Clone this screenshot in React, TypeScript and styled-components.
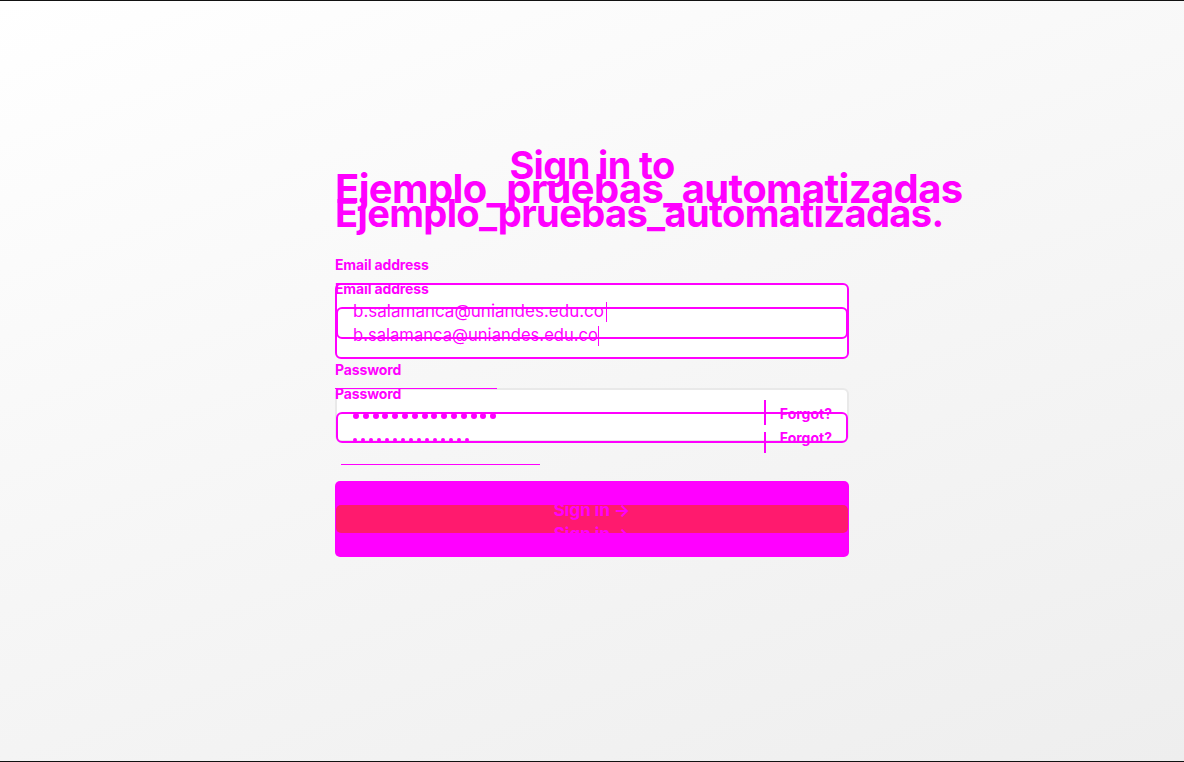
import React from 'react';
import styled, { createGlobalStyle } from 'styled-components';

const MAGENTA = '#ff00ff';
const PINK = '#ff1a6e';

const GlobalStyle = createGlobalStyle`
  html, body {
    margin: 0;
    padding: 0;
  }
  body {
    font-family: Inter, "Noto Sans", sans-serif;
  }
  * {
    box-sizing: border-box;
  }
`;

const Page = styled.div`
  width: 1184px;
  height: 762px;
  border-top: 1px solid #111;
  border-bottom: 1px solid #111;
  background: linear-gradient(160deg, #ffffff 0%, #f7f7f7 45%, #eeeeee 100%);
  overflow: hidden;
`;

const Column = styled.main`
  width: 514px;
  margin: 0 auto;
  padding-top: 152px;
  display: flex;
  flex-direction: column;
`;

const Heading = styled.h1`
  margin: 0;
  text-align: center;
  color: ${MAGENTA};
  font-weight: 700;
  line-height: 24px;
  letter-spacing: -0.02em;
  white-space: nowrap;
`;

const HeadingLine = styled.span<{ $size: number }>`
  display: block;
  font-size: ${(p) => p.$size}px;
`;

const LabelStack = styled.div<{ $top: number }>`
  position: relative;
  z-index: 2;
  margin-top: ${(p) => p.$top}px;
  color: ${MAGENTA};
  font-size: 14px;
  font-weight: 700;
  line-height: 24px;
  letter-spacing: -0.01em;
`;

const EmailBox = styled.div`
  position: relative;
  margin-top: -18px;
  height: 76px;
  padding: 14px 16px 0;
  background: #fff;
  border: 2px solid ${MAGENTA};
  border-radius: 6px;
`;

const InnerOutline = styled.div<{ $top: number; $height: number }>`
  position: absolute;
  left: -1px;
  right: -1px;
  top: ${(p) => p.$top}px;
  height: ${(p) => p.$height}px;
  border: 2px solid ${MAGENTA};
  border-radius: 6px;
`;

const ValueLine = styled.div<{ $size: number }>`
  position: relative;
  height: 24px;
  line-height: 24px;
  font-size: ${(p) => p.$size}px;
  color: ${MAGENTA};
  white-space: nowrap;
`;

const Caret = styled.span<{ $gap: number }>`
  display: inline-block;
  width: 1px;
  height: 20px;
  margin-left: ${(p) => p.$gap}px;
  vertical-align: middle;
  background: ${MAGENTA};
`;

const PasswordBox = styled.div`
  position: relative;
  margin-top: -18px;
  height: 54px;
  background: #fff;
  border: 2px solid #e9e9e9;
  border-radius: 6px;
  display: flex;
  align-items: flex-start;
`;

const TopTrace = styled.div`
  position: absolute;
  left: -2px;
  top: -2px;
  width: 162px;
  height: 1px;
  background: ${MAGENTA};
`;

const Dots = styled.div`
  flex: 1;
  margin-top: 14px;
  padding-left: 16px;
`;

const DotRow = styled.div<{ $dot: number; $gap: number }>`
  height: 24px;
  display: flex;
  align-items: center;
  gap: ${(p) => p.$gap}px;

  span {
    width: ${(p) => p.$dot}px;
    height: ${(p) => p.$dot}px;
    border-radius: 50%;
    background: ${MAGENTA};
  }
`;

const Divider = styled.div`
  margin-top: 10px;
  display: flex;
  flex-direction: column;
  gap: 7px;

  span {
    width: 2px;
    background: ${MAGENTA};
  }
`;

const Forgot = styled.div`
  margin-top: 12px;
  padding: 0 15px 0 14px;
  color: ${MAGENTA};
  font-size: 14px;
  font-weight: 700;
  line-height: 24px;
  position: relative;
  z-index: 1;
`;

const Underline = styled.div`
  margin: 22px 0 0 6px;
  width: 199px;
  height: 1px;
  background: ${MAGENTA};
`;

const SignInButton = styled.button`
  position: relative;
  margin-top: 16px;
  height: 76px;
  padding: 17px 0 0;
  border: none;
  border-radius: 5px;
  background: ${MAGENTA};
  font-family: inherit;
  display: flex;
  flex-direction: column;
  align-items: center;
`;

const Band = styled.div`
  position: absolute;
  left: 1px;
  right: 1px;
  top: 24px;
  height: 28px;
  border-radius: 5px;
  background: ${PINK};
`;

const ButtonText = styled.span`
  position: relative;
  z-index: 1;
  height: 24px;
  line-height: 24px;
  font-size: 17px;
  font-weight: 700;
  color: ${MAGENTA};
`;

const dots = (n: number) => Array.from({ length: n }, (_, i) => <span key={i} />);

export default function App() {
  return (
    <>
      <GlobalStyle />
      <Page>
        <Column>
          <Heading>
            <HeadingLine $size={38}>Sign in to</HeadingLine>
            <HeadingLine $size={40}>Ejemplo_pruebas_automatizadas</HeadingLine>
            <HeadingLine $size={38.1}>Ejemplo_pruebas_automatizadas.</HeadingLine>
          </Heading>

          <LabelStack $top={28}>
            <div>Email address</div>
            <div>Email address</div>
          </LabelStack>
          <EmailBox>
            <InnerOutline $top={22} $height={32} />
            <ValueLine $size={17}>
              b.salamanca@uniandes.edu.co<Caret $gap={2} />
            </ValueLine>
            <ValueLine $size={16.6}>
              b.salamanca@uniandes.edu.co<Caret $gap={0} />
            </ValueLine>
          </EmailBox>

          <LabelStack $top={-1}>
            <div>Password</div>
            <div>Password</div>
          </LabelStack>
          <PasswordBox>
            <TopTrace />
            <InnerOutline $top={22} $height={31} />
            <Dots>
              <DotRow $dot={6} $gap={3.8}>{dots(15)}</DotRow>
              <DotRow $dot={4} $gap={4}>{dots(15)}</DotRow>
            </Dots>
            <Divider>
              <span style={{ height: 25 }} />
              <span style={{ height: 21 }} />
            </Divider>
            <Forgot>
              <div>Forgot?</div>
              <div>Forgot?</div>
            </Forgot>
          </PasswordBox>
          <Underline />

          <SignInButton type="button">
            <Band />
            <ButtonText>Sign in →</ButtonText>
            <ButtonText>Sign in →</ButtonText>
          </SignInButton>
        </Column>
      </Page>
    </>
  );
}
